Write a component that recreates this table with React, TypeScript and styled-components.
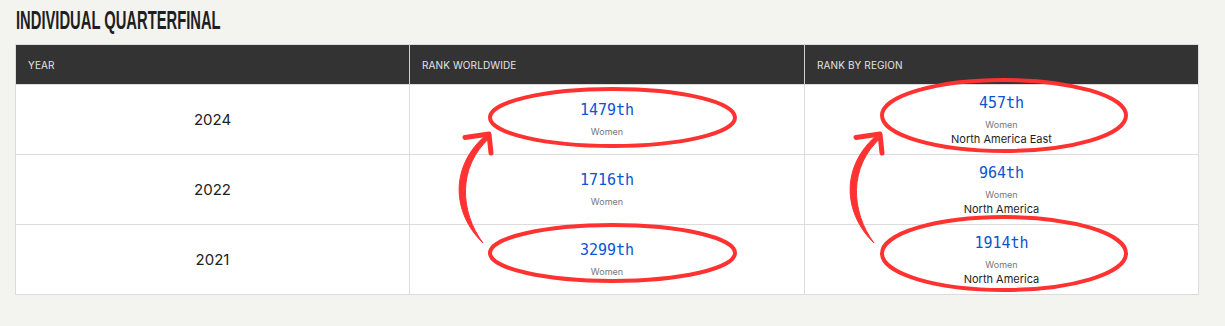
import styled, { createGlobalStyle } from "styled-components";

const GlobalStyle = createGlobalStyle`
  html, body {
    margin: 0;
    padding: 0;
    background: #f3f3ef;
  }
`;

type Row = {
  year: string;
  world: string;
  region: string;
  regionName: string;
};

const rows: Row[] = [
  { year: "2024", world: "1479th", region: "457th", regionName: "North America East" },
  { year: "2022", world: "1716th", region: "964th", regionName: "North America" },
  { year: "2021", world: "3299th", region: "1914th", regionName: "North America" },
];

export default function App() {
  return (
    <>
      <GlobalStyle />
      <Page>
        <Title>Individual Quarterfinal</Title>
        <Table>
          <colgroup>
            <col style={{ width: 394 }} />
            <col style={{ width: 395 }} />
            <col style={{ width: 394 }} />
          </colgroup>
          <thead>
            <tr>
              <HeadCell>Year</HeadCell>
              <HeadCell>Rank Worldwide</HeadCell>
              <HeadCell>Rank by Region</HeadCell>
            </tr>
          </thead>
          <tbody>
            {rows.map((r) => (
              <tr key={r.year}>
                <Cell>
                  <Year>{r.year}</Year>
                </Cell>
                <Cell>
                  <Rank>{r.world}</Rank>
                  <Gender>Women</Gender>
                </Cell>
                <Cell>
                  <Rank>{r.region}</Rank>
                  <Gender>Women</Gender>
                  <Region>{r.regionName}</Region>
                </Cell>
              </tr>
            ))}
          </tbody>
        </Table>
        <Marks width="1225" height="326" viewBox="0 0 1225 326">
          <g fill="none" stroke="#ff3232" strokeWidth="4">
            <ellipse cx="612.5" cy="117.5" rx="122.5" ry="28.5" />
            <ellipse cx="612.5" cy="253" rx="122.5" ry="28" />
            <ellipse cx="1004" cy="115.5" rx="122" ry="35.5" />
            <ellipse cx="1004" cy="253.5" rx="122" ry="36.5" />
          </g>
          <Arrow />
          <g transform="translate(391 0)">
            <Arrow />
          </g>
        </Marks>
      </Page>
    </>
  );
}

function Arrow() {
  return (
    <g fill="#ff3232" stroke="#ff3232">
      <path
        d="M 483 243 C 452 213, 449 166, 487 134 L 490 137.5 C 457 167, 460 212, 483 243 Z"
        strokeWidth="1"
        strokeLinejoin="round"
      />
      <path
        d="M 465 137.5 L 489 134 L 491 153"
        fill="none"
        strokeWidth="5"
        strokeLinecap="round"
        strokeLinejoin="round"
      />
    </g>
  );
}

const Page = styled.div`
  position: relative;
  width: 1225px;
  height: 326px;
  padding: 6px 26px 0 16px;
  box-sizing: border-box;
`;

const Title = styled.h2`
  display: block;
  width: 360px;
  margin: 0 0 9px;
  font-family: "Liberation Sans", Arial, sans-serif;
  font-weight: 700;
  font-size: 25px;
  line-height: 29px;
  text-transform: uppercase;
  color: #1f1f1f;
  transform: scaleX(0.59);
  transform-origin: left center;
  white-space: nowrap;
`;

const Table = styled.table`
  width: 1184px;
  margin-left: -1px;
  table-layout: fixed;
  border-collapse: collapse;
  background: #fff;
  border: 1px solid #dcdcdc;
  font-family: Inter, "Liberation Sans", sans-serif;
`;

const HeadCell = styled.th`
  height: 40px;
  padding: 0 12px;
  background: #333333;
  color: #e4e4e4;
  font-size: 10px;
  font-weight: 400;
  text-align: left;
  text-transform: uppercase;
  letter-spacing: 0.1px;
  border-left: 1px solid #cfcfcf;
  box-sizing: border-box;

  &:first-child {
    border-left: none;
  }
`;

const Cell = styled.td`
  height: 70px;
  padding: 0;
  text-align: center;
  vertical-align: middle;
  border: 1px solid #dcdcdc;
  box-sizing: border-box;
`;

const Year = styled.div`
  font-size: 15px;
  color: #222;
`;

const Rank = styled.div`
  font-family: "DejaVu Sans Mono", "Liberation Mono", monospace;
  font-size: 15px;
  line-height: 20px;
  margin-bottom: 5px;
  color: #0b55d0;
`;

const Gender = styled.div`
  font-size: 9px;
  line-height: 14px;
  color: #777;
`;

const Region = styled.div`
  font-size: 11px;
  line-height: 15px;
  color: #1e1e1e;
`;

const Marks = styled.svg`
  position: absolute;
  top: 0;
  left: 0;
  pointer-events: none;
`;
